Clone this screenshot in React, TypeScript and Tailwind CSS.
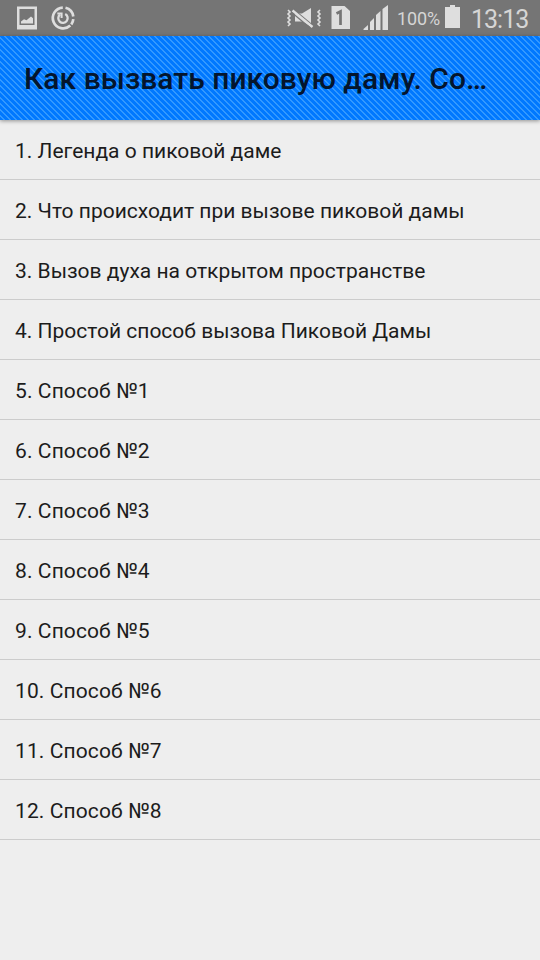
import React from 'react';

const items = [
  'Легенда о пиковой даме',
  'Что происходит при вызове пиковой дамы',
  'Вызов духа на открытом пространстве',
  'Простой способ вызова Пиковой Дамы',
  'Способ №1',
  'Способ №2',
  'Способ №3',
  'Способ №4',
  'Способ №5',
  'Способ №6',
  'Способ №7',
  'Способ №8',
];

const StatusBar: React.FC = () => (
  <div className="flex h-9 items-center bg-[#757575] text-[#dedede]">
    <svg className="ml-4 h-9 w-[22px]" viewBox="16 0 22 36" fill="currentColor">
      <path fillRule="evenodd" d="M17 6.500h20v23H17zM19.500 9v16h15V9z" />
      <path d="M21 23.500V21.500l3-2.200 2.500 1 4.500-3.800 2 1.800v5.200z" />
    </svg>
    <svg className="ml-3 h-9 w-[26px]" viewBox="50 0 26 36" fill="none" stroke="currentColor" strokeWidth="2.7">
      <path d="M62.800 7.600A10.400 10.400 0 1 0 70.300 25.600" />
      <path d="M65.500 7.800A10.400 10.400 0 0 1 73.300 16.500" />
      <path d="M73.300 19.200A10.400 10.400 0 0 1 71.300 24.500" />
      <path d="M65.200 14A4.700 4.700 0 1 1 60 14.500" strokeWidth="2.3" />
      <path d="M57.300 13.600h4.300v4.300" strokeWidth="2" />
    </svg>
    <svg className="ml-auto h-9 w-[36px]" viewBox="286 0 36 36" fill="none" stroke="currentColor">
      <path d="M288 10l2 2-2 2 2 2-2 2 2 2-2 2 2 2-2 2" strokeWidth="1.6" />
      <path d="M320 10l-2 2 2 2-2 2 2 2-2 2 2 2-2 2 2 2" strokeWidth="1.6" />
      <path d="M295 13.500h7l9-5.500v18.500l-9-5h-7z" fill="currentColor" stroke="none" />
      <path d="M292 8.500l21 17.500" stroke="#757575" strokeWidth="2" />
      <path d="M292.500 10.500l20 16.500" strokeWidth="2.4" />
      <path d="M292 12.700l18 15" stroke="#757575" strokeWidth="1.2" />
    </svg>
    <svg className="ml-[9px] h-9 w-5" viewBox="331 0 20 36">
      <path d="M331.500 6h13l5.500 5v18h-18.500z" fill="currentColor" />
      <path d="M336.500 13.500l4-2v13.500" fill="none" stroke="#757575" strokeWidth="2.7" />
    </svg>
    <svg className="ml-3 h-9 w-[26px]" viewBox="363 0 26 36" fill="currentColor">
      <path d="M363.500 30v-1l4.500-4v5zM370 30v-8l4-4v12zM376 30V15l4.500-4v19zM382.500 30V9l5.500-4v25z" />
    </svg>
    <span className="ml-[8px] w-[44px] whitespace-nowrap pt-0.5 text-[18px] leading-9 tracking-[-0.1px] text-[#d6d6d6]">100%</span>
    <svg className="ml-1 h-9 w-4" viewBox="445 0 16 36" fill="currentColor">
      <path d="M445 7h5V5h5v2h5v21h-15z" />
    </svg>
    <span className="mr-[11px] ml-[10px] w-[58px] whitespace-nowrap pt-[3px] text-[25px] leading-9 tracking-[-1px] text-[#d6d6d6]">13:13</span>
  </div>
);

export default function App() {
  return (
    <div className="min-h-screen w-full bg-[#eeeeee] font-[Roboto,sans-serif]">
      <StatusBar />
      <header className="flex h-[84px] items-center bg-[#087bff] bg-[repeating-linear-gradient(45deg,#0078ff_0px,#0078ff_2.1px,#3399ff_2.8px,#3399ff_3.5px,#0078ff_4.243px)] px-6 shadow-[0_1px_4px_rgba(0,0,0,0.4)]">
        <h1 className="whitespace-nowrap text-[30px] font-medium tracking-[0.03px] text-[#04152d]">Как вызвать пиковую даму. Со…</h1>
      </header>
      <ol>
        {items.map((item, i) => (
          <li key={item} className="flex h-[60px] items-center border-b border-[#cccccc] px-[15px] pt-1 text-[21px] text-[#1c1c1c]">
            <span className={i > 3 ? 'tracking-[0.1px]' : ''}>{i + 1}. {item}</span>
          </li>
        ))}
      </ol>
    </div>
  );
}
